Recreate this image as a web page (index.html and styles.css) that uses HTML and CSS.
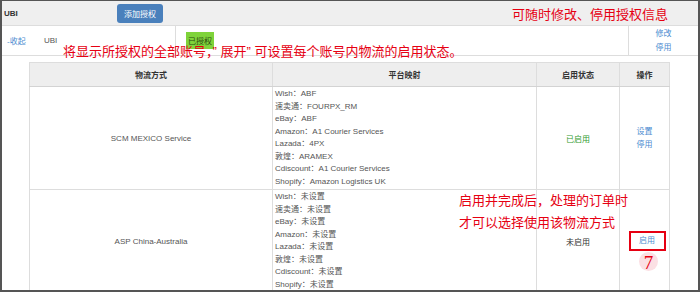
FILE: index.html
```html
<!DOCTYPE html>
<html lang="zh-CN">
<head>
    <meta charset="UTF-8">
    <title>物流授权</title>
    <link rel="stylesheet" href="styles.css">
</head>
<body>
    <div class="frame">
        <div class="topbar">
            <span class="acct-title">UBI</span>
            <button type="button" class="btn-add">添加授权</button>
        </div>

        <div class="acct-row">
            <div class="acct-name">
                <a class="toggle">-收起</a>
                <span>UBI</span>
            </div>
            <div class="acct-status">
                <span class="badge">已授权</span>
            </div>
            <div class="acct-ops">
                <a>修改</a>
                <a>停用</a>
            </div>
        </div>

        <div class="detail">
            <table class="ship-table">
                <colgroup>
                    <col class="c-name">
                    <col class="c-map">
                    <col class="c-state">
                    <col class="c-ops">
                </colgroup>
                <thead>
                    <tr>
                        <th>物流方式</th>
                        <th>平台映射</th>
                        <th>启用状态</th>
                        <th>操作</th>
                    </tr>
                </thead>
                <tbody>
                    <tr>
                        <td>SCM MEXICO Service</td>
                        <td class="map">
                            <div>Wish：ABF</div>
                            <div>速卖通：FOURPX_RM</div>
                            <div>eBay：ABF</div>
                            <div>Amazon：A1 Courier Services</div>
                            <div>Lazada：4PX</div>
                            <div>敦煌：ARAMEX</div>
                            <div>Cdiscount：A1 Courier Services</div>
                            <div>Shopify：Amazon Logistics UK</div>
                        </td>
                        <td><span class="on">已启用</span></td>
                        <td class="ops">
                            <a>设置</a>
                            <a>停用</a>
                        </td>
                    </tr>
                    <tr>
                        <td>ASP China-Australia</td>
                        <td class="map">
                            <div>Wish：未设置</div>
                            <div>速卖通：未设置</div>
                            <div>eBay：未设置</div>
                            <div>Amazon：未设置</div>
                            <div>Lazada：未设置</div>
                            <div>敦煌：未设置</div>
                            <div>Cdiscount：未设置</div>
                            <div>Shopify：未设置</div>
                        </td>
                        <td><span class="off">未启用</span></td>
                        <td class="ops">
                            <a class="boxed">启用</a>
                        </td>
                    </tr>
                </tbody>
            </table>
        </div>

        <!-- annotations -->
        <span class="note note-top">可随时修改、停用授权信息</span>
        <span class="note note-expand">将显示所授权的全部账号，” 展开” 可设置每个账号内物流的启用状态。</span>
        <span class="note note-enable">启用并完成后，处理的订单时<br>才可以选择使用该物流方式</span>
        <span class="step">7</span>
    </div>
</body>
</html>
```

FILE: styles.css
```css
* {
    box-sizing: border-box;
}

body {
    margin: 0;
    font-family: "Liberation Sans", "Noto Sans CJK SC", sans-serif;
    font-size: 8px;
    color: #555;
    background: #fff;
}

a {
    color: #4b8bd0;
    cursor: pointer;
}

.frame {
    position: relative;
    width: 700px;
    height: 292px;
    border: 2px solid #555;
    border-top-width: 1px;
    overflow: hidden;
}

.topbar {
    display: flex;
    align-items: center;
    height: 25px;
    padding-left: 2px;
    background: #efefef;
    border-bottom: 1px solid #ddd;
}

.acct-title {
    width: 113px;
    font-weight: bold;
    color: #333;
}

.btn-add {
    width: 46px;
    height: 19px;
    padding: 0;
    border: none;
    border-radius: 3px;
    background: #4a80bc;
    color: #fff;
    font-family: inherit;
    font-size: 8px;
}

.acct-row {
    display: grid;
    grid-template-columns: 173px 453px 1fr;
    height: 30px;
    border-bottom: 1px solid #ddd;
}

.acct-name,
.acct-status {
    display: flex;
    align-items: center;
}

.acct-name {
    padding-left: 5px;
}

.acct-name .toggle {
    width: 37px;
}

.acct-status {
    padding-left: 10px;
    border-left: 1px solid #ddd;
}

.badge {
    padding: 3px 2px;
    background: #7fd33a;
    color: #2a4a10;
}

.acct-ops {
    display: flex;
    flex-direction: column;
    justify-content: center;
    align-items: center;
    line-height: 14px;
    border-left: 1px solid #ddd;
}

.detail {
    padding: 6px 0 0 27px;
}

.ship-table {
    width: 640px;
    border-collapse: collapse;
    table-layout: fixed;
}

.c-name { width: 243px; }
.c-map { width: 264px; }
.c-state { width: 83px; }
.c-ops { width: 50px; }

.ship-table th {
    height: 24px;
    padding: 0;
    background: #eee;
    color: #333;
    font-weight: bold;
    border: 1px solid #ddd;
    border-bottom-color: #d3d3d3;
}

.ship-table td {
    padding: 0;
    text-align: center;
    vertical-align: middle;
    border: 1px solid #ddd;
}

.ship-table td.map {
    padding: 1px 2px;
    text-align: left;
    line-height: 12.5px;
}

.ship-table td.ops a {
    display: block;
    line-height: 13px;
}

.on {
    color: #2f9a2f;
}

.off {
    color: #333;
}

.ship-table td.ops a.boxed {
    display: inline-block;
    width: 37px;
    height: 20px;
    margin-left: 5px;
    line-height: 16px;
    border: 2px solid #e60012;
}

.note {
    position: absolute;
    color: #e60012;
    font-family: "Liberation Sans", "Noto Sans CJK SC", sans-serif;
    font-size: 13px;
    line-height: 13px;
    white-space: nowrap;
}

.note-top {
    left: 510px;
    top: 7px;
}

.note-expand {
    left: 61px;
    top: 44px;
}

.note-enable {
    left: 457px;
    top: 189px;
    line-height: 22px;
}

.step {
    position: absolute;
    left: 637px;
    top: 251px;
    width: 19px;
    height: 19px;
    border-radius: 50%;
    background: #fbe0e4;
    color: #e60012;
    font-family: "Liberation Serif", serif;
    font-size: 19px;
    line-height: 21px;
    text-align: center;
}
```
